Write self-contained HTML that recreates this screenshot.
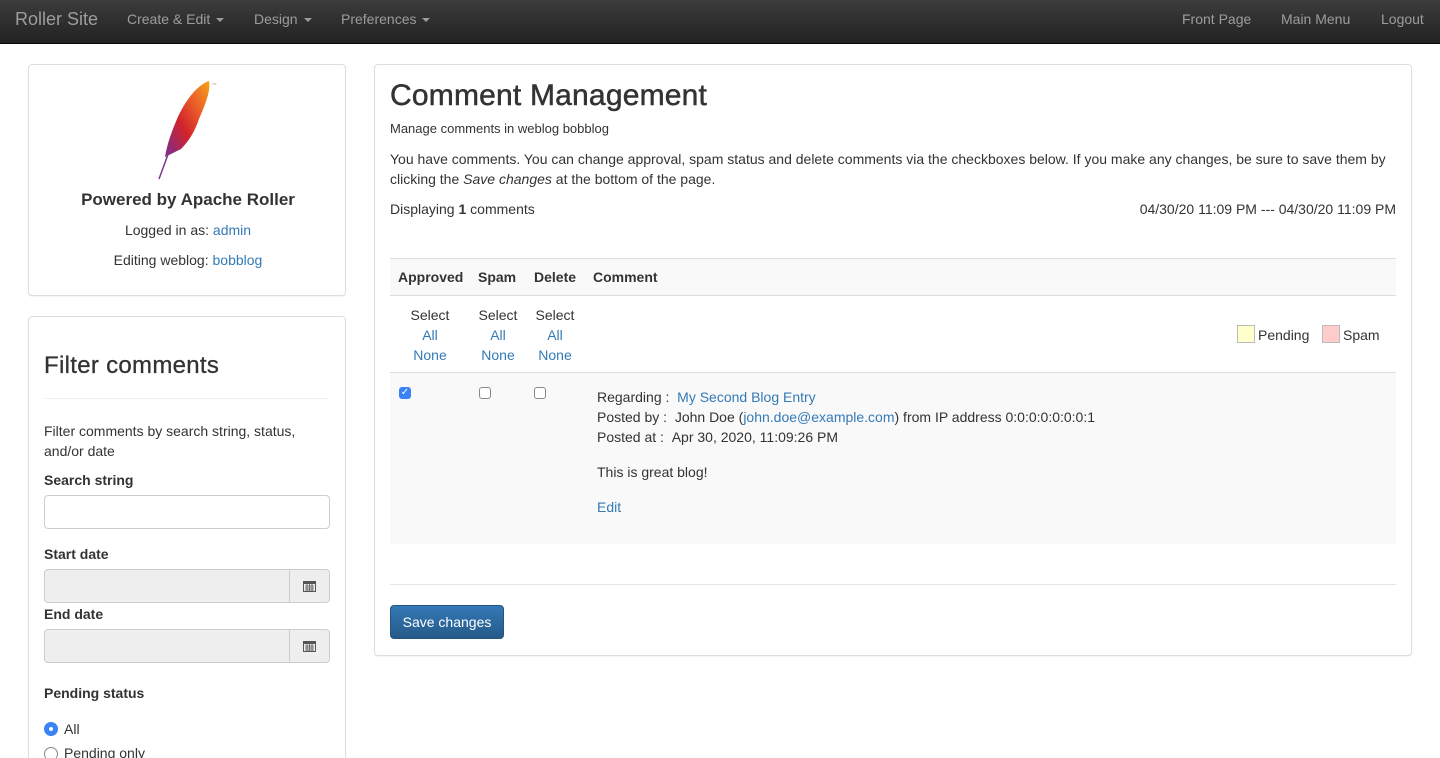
<!DOCTYPE html>
<html style="overflow:hidden"><head><meta charset="utf-8"><style>
*{box-sizing:border-box}
html,body{height:758px}
body{margin:0;width:1440px;overflow:hidden;font-family:"Liberation Sans",Arial,sans-serif;font-size:14px;color:#333;background:#fff;position:relative}
a{color:#337ab7;text-decoration:none}
.abs{position:absolute}
.nav{position:absolute;left:0;top:0;width:1440px;height:44px;background:linear-gradient(#3c3c3c,#222);border-bottom:1px solid #080808}
.nav span{position:absolute;top:11px;color:#9d9d9d;font-size:14px}
.caret{display:inline-block;border-top:4px solid #9d9d9d;border-left:4px solid transparent;border-right:4px solid transparent;vertical-align:middle;margin-left:6px}
.panel{position:absolute;border:1px solid #ddd;border-radius:4px;background:#fff;box-shadow:0 1px 1px rgba(0,0,0,.05)}
.inp{position:absolute;left:44px;width:286px;height:34px;border:1px solid #ccc;border-radius:4px;background:#fff}
.inp.d{background:#eee}
.inp .btn{position:absolute;right:0;top:0;width:40px;height:32px;border-left:1px solid #ccc;background:#eee;border-radius:0 4px 4px 0}
.lbl{position:absolute;left:44px;font-weight:bold}
.cb{position:absolute;width:12px;height:12px;border:1px solid #888;border-radius:3px;background:#fff}
.c{position:absolute;text-align:center;width:60px;line-height:20px}
</style></head><body>
<div class="nav">
<span style="left:15px;top:9px;font-size:18px">Roller Site</span>
<span style="left:127px">Create &amp; Edit<i class="caret"></i></span>
<span style="left:254px">Design<i class="caret"></i></span>
<span style="left:341px">Preferences<i class="caret"></i></span>
<span style="left:1182px">Front Page</span>
<span style="left:1281px">Main Menu</span>
<span style="left:1381px">Logout</span>
</div>

<div class="panel" style="left:28px;top:64px;width:318px;height:232px">
<svg class="abs" style="left:126px;top:14px" width="64" height="102" viewBox="0 0 64 102">
<defs><linearGradient id="f" x1="1" y1="0" x2="0" y2="1"><stop offset="0" stop-color="#f7a21b"/><stop offset=".35" stop-color="#e8562a"/><stop offset=".6" stop-color="#d2232a"/><stop offset=".9" stop-color="#8c2b79"/></linearGradient></defs>
<path d="M54 2 C42 6 30 22 22 40 C16 54 12 66 10 78 L12 77 L26 70 C34 62 40 52 44 40 C50 26 56 12 54 2Z" fill="url(#f)"/>
<path d="M15 70 L4 100" stroke="#7b3a8e" stroke-width="1.5"/>
<text x="57" y="6" font-size="3" fill="#999">TM</text>
</svg>
<div class="abs" style="left:0;width:318px;top:125px;text-align:center;font-size:17px;font-weight:bold">Powered by Apache Roller</div>
<div class="abs" style="left:0;width:318px;top:157px;text-align:center">Logged in as: <a>admin</a></div>
<div class="abs" style="left:0;width:318px;top:187px;text-align:center">Editing weblog: <a>bobblog</a></div>
</div>

<div class="panel" style="left:28px;top:316px;width:318px;height:460px">
<div class="abs" style="left:15px;top:35px;font-size:24px;font-weight:500;letter-spacing:.3px;-webkit-text-stroke:.3px #333">Filter comments</div>
<div class="abs" style="left:16px;top:81px;width:284px;border-top:1px solid #eee"></div>
<div class="abs" style="left:15px;top:104px;width:270px;line-height:20px">Filter comments by search string, status, and/or date</div>
</div>
<div class="lbl" style="top:472px">Search string</div>
<div class="inp" style="top:495px"></div>
<div class="lbl" style="top:546px">Start date</div>
<div class="inp d" style="top:569px"><div class="btn"><svg class="abs" style="left:13px;top:10px" width="13" height="12"><rect x=".5" y="1.5" width="12" height="10" fill="none" stroke="#555"/><rect x="0" y="1" width="13" height="3" fill="#555"/><path d="M2 6h9M2 8h9M2 10h9M4 4v7M6.5 4v7M9 4v7" stroke="#555" stroke-width=".8"/></svg></div></div>
<div class="lbl" style="top:606px">End date</div>
<div class="inp d" style="top:629px"><div class="btn"><svg class="abs" style="left:13px;top:10px" width="13" height="12"><rect x=".5" y="1.5" width="12" height="10" fill="none" stroke="#555"/><rect x="0" y="1" width="13" height="3" fill="#555"/><path d="M2 6h9M2 8h9M2 10h9M4 4v7M6.5 4v7M9 4v7" stroke="#555" stroke-width=".8"/></svg></div></div>
<div class="lbl" style="top:685px">Pending status</div>
<div class="abs" style="left:44px;top:722px;width:14px;height:14px;border-radius:50%;background:#3b82f6"><div class="abs" style="left:5px;top:5px;width:4px;height:4px;border-radius:50%;background:#fff"></div></div>
<div class="abs" style="left:64px;top:721px">All</div>
<div class="abs" style="left:44px;top:747px;width:14px;height:14px;border-radius:50%;border:1px solid #888"></div>
<div class="abs" style="left:64px;top:745px">Pending only</div>

<div class="panel" style="left:374px;top:64px;width:1038px;height:592px"></div>
<div class="abs" style="left:390px;top:79px;font-size:30px;font-weight:500;letter-spacing:.2px;-webkit-text-stroke:.5px #333">Comment Management</div>
<div class="abs" style="left:390px;top:121px;font-size:13px">Manage comments in weblog bobblog</div>
<div class="abs" style="left:390px;top:149px;width:1012px;line-height:20px;font-size:14px">You have comments. You can change approval, spam status and delete comments via the checkboxes below. If you make any changes, be sure to save them by clicking the <i>Save changes</i> at the bottom of the page.</div>
<div class="abs" style="left:390px;top:201px">Displaying <b>1</b> comments</div>
<div class="abs" style="right:44px;top:201px">04/30/20 11:09 PM --- 04/30/20 11:09 PM</div>

<div class="abs" style="left:390px;top:258px;width:1006px;height:38px;background:#f9f9f9;border-top:1px solid #ddd;border-bottom:1px solid #ddd"></div>
<div class="abs" style="left:398px;top:269px;font-weight:bold">Approved</div>
<div class="abs" style="left:478px;top:269px;font-weight:bold">Spam</div>
<div class="abs" style="left:534px;top:269px;font-weight:bold">Delete</div>
<div class="abs" style="left:593px;top:269px;font-weight:bold">Comment</div>

<div class="c" style="left:400px;top:305px">Select<br><a>All</a><br><a>None</a></div>
<div class="c" style="left:468px;top:305px">Select<br><a>All</a><br><a>None</a></div>
<div class="c" style="left:525px;top:305px">Select<br><a>All</a><br><a>None</a></div>
<div class="abs" style="left:1237px;top:325px;width:18px;height:18px;background:#ffffcc;border:1px solid #bbb"></div>
<div class="abs" style="left:1258px;top:327px">Pending</div>
<div class="abs" style="left:1322px;top:325px;width:18px;height:18px;background:#ffcccc;border:1px solid #bbb"></div>
<div class="abs" style="left:1343px;top:327px">Spam</div>

<div class="abs" style="left:390px;top:372px;width:1006px;height:172px;background:#f9f9f9;border-top:1px solid #ddd"></div>
<div class="abs" style="left:399px;top:387px;width:12px;height:12px;border-radius:3px;background:#3b82f6;color:#fff;font-size:10px;line-height:12px;text-align:center">✓</div>
<div class="cb" style="left:479px;top:387px"></div>
<div class="cb" style="left:534px;top:387px"></div>
<div class="abs" style="left:597px;top:387px;line-height:20px">Regarding : &nbsp;<a>My Second Blog Entry</a><br>Posted by : &nbsp;John Doe (<a>john.doe@example.com</a>) from IP address 0:0:0:0:0:0:0:1<br>Posted at : &nbsp;Apr 30, 2020, 11:09:26 PM</div>
<div class="abs" style="left:597px;top:464px">This is great blog!</div>
<div class="abs" style="left:597px;top:499px"><a>Edit</a></div>

<div class="abs" style="left:390px;top:584px;width:1006px;border-top:1px solid #e5e5e5"></div>
<div class="abs" style="left:390px;top:605px;width:114px;height:34px;border-radius:4px;background:linear-gradient(#337ab7,#265a88);border:1px solid #245580;color:#fff;text-align:center;line-height:32px">Save changes</div>
</body></html>
